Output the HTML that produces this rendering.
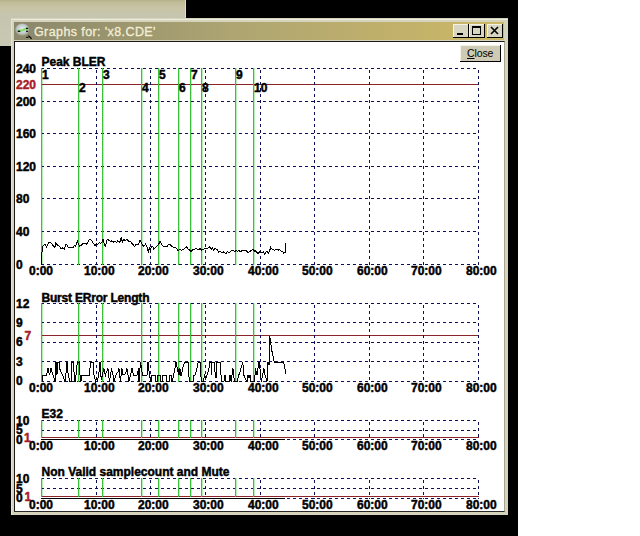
<!DOCTYPE html>
<html><head><meta charset="utf-8">
<style>
html,body{margin:0;padding:0;}
body{width:640px;height:536px;position:relative;overflow:hidden;background:#fff;font-family:"Liberation Sans", sans-serif;}
.a{position:absolute;}
</style></head><body>
<div class="a" style="left:0;top:0;width:518px;height:536px;background:#000"></div>
<div class="a" style="left:0;top:0;width:186px;height:46px;background:linear-gradient(#b2ae86 0px,#c0bc96 2px,#c8c4a6 8px,#c5c5b0 18px,#c8c8b4 46px)"></div>
<div class="a" style="left:185px;top:0;width:1px;height:18px;background:#dedcc8"></div>
<!-- window -->
<div class="a" style="left:11px;top:18px;width:497px;height:497px;background:#d6d3bd"></div>
<div class="a" style="left:11px;top:19px;width:497px;height:1px;background:#ecebdc"></div>
<div class="a" style="left:11px;top:19px;width:1px;height:496px;background:#e6e4d2"></div>
<div class="a" style="left:14px;top:22px;width:490px;height:18px;background:linear-gradient(90deg,#8a886c 0%,#aea572 45%,#cdb866 100%)"></div>
<div class="a" style="left:34px;top:25px;font-size:12.5px;color:#f2eed6;line-height:14px;white-space:nowrap;letter-spacing:0.4px;-webkit-text-stroke:0.3px #f2eed6">Graphs for: 'x8.CDE'</div>
<svg class="a" style="left:14px;top:22px" width="20" height="18">
<defs><radialGradient id="ig" cx="0.5" cy="0.45" r="0.55"><stop offset="0" stop-color="#e4ecf0"/><stop offset="0.6" stop-color="#c4ccd0"/><stop offset="1" stop-color="#9c9c84"/></radialGradient></defs>
<ellipse cx="8.3" cy="7.6" rx="7" ry="6.2" fill="url(#ig)"/>
<path d="M3 9.3 L8.5 8.2 L14 5.8" stroke="#78e050" stroke-width="2" fill="none" opacity="0.9"/>
<rect x="3.8" y="8.6" width="2.4" height="1.4" fill="#101010"/>
<rect x="12" y="5.8" width="2.2" height="1.3" fill="#101010"/>
<rect x="12" y="8.7" width="2.2" height="1.2" fill="#101010"/>
<path d="M14.3 13.6 L17.6 16.8" stroke="#000" stroke-width="1.2"/>
<rect x="12.2" y="14.8" width="2.2" height="1.1" fill="#000"/>
</svg>
<!-- caption buttons -->
<div class="a" style="left:453px;top:24px;width:16px;height:14px;background:#d8d5c0;box-shadow:inset -1px -1px #000,inset 1px 1px #f4f2e4"></div>
<div class="a" style="left:469px;top:24px;width:16px;height:14px;background:#d8d5c0;box-shadow:inset -1px -1px #000,inset 1px 1px #f4f2e4"></div>
<div class="a" style="left:487px;top:24px;width:16px;height:14px;background:#d8d5c0;box-shadow:inset -1px -1px #000,inset 1px 1px #f4f2e4"></div>
<div class="a" style="left:457px;top:33px;width:6px;height:2px;background:#000"></div>
<div class="a" style="left:472px;top:26px;width:9px;height:9px;box-sizing:border-box;border:1px solid #000;border-top-width:2px"></div>
<svg class="a" style="left:487px;top:24px" width="16" height="14"><path d="M4 3 L11 10 M11 3 L4 10" stroke="#000" stroke-width="1.6"/></svg>
<!-- client -->
<div class="a" style="left:14px;top:41px;width:491px;height:471px;background:#fff;box-sizing:border-box;border:1px solid #1a1a1a;border-right-color:#a8a690;border-bottom-color:#2a2a2a"></div>
<!-- close button -->
<div class="a" style="left:460px;top:45px;width:41px;height:17px;background:#cecab4;box-sizing:border-box;box-shadow:inset -1px -1px #000,inset 1px 1px #f4f2e4"></div>
<div class="a" style="left:467px;top:46px;font-size:10.5px;line-height:14px;color:#000;letter-spacing:-0.1px"><u>C</u>lose</div>
<svg class="a" style="left:0;top:0" width="640" height="536" font-family='"Liberation Sans", sans-serif' shape-rendering="crispEdges">
<line x1="42.5" y1="68" x2="42.5" y2="265" stroke="#b8f0b8"/>
<line x1="79.5" y1="68" x2="79.5" y2="265" stroke="#b8f0b8"/>
<line x1="103.5" y1="68" x2="103.5" y2="265" stroke="#b8f0b8"/>
<line x1="142.5" y1="68" x2="142.5" y2="265" stroke="#b8f0b8"/>
<line x1="159.5" y1="68" x2="159.5" y2="265" stroke="#b8f0b8"/>
<line x1="179.5" y1="68" x2="179.5" y2="265" stroke="#b8f0b8"/>
<line x1="191.5" y1="68" x2="191.5" y2="265" stroke="#b8f0b8"/>
<line x1="202.5" y1="68" x2="202.5" y2="265" stroke="#b8f0b8"/>
<line x1="236.5" y1="68" x2="236.5" y2="265" stroke="#b8f0b8"/>
<line x1="254.5" y1="68" x2="254.5" y2="265" stroke="#b8f0b8"/>
<text x="41.5" y="65.748" fill="#000" stroke="#000" stroke-width="0.45" font-size="12" font-weight="bold" text-anchor="start">Peak BLER</text>
<line x1="41" y1="68.5" x2="479" y2="68.5" stroke="#0e0e58" stroke-dasharray="3 3" stroke-dashoffset="0"/>
<text x="16" y="72.874" fill="#000" stroke="#000" stroke-width="0.45" font-size="12" font-weight="bold" text-anchor="start">240</text>
<line x1="41" y1="101.5" x2="479" y2="101.5" stroke="#0e0e58" stroke-dasharray="3 3" stroke-dashoffset="0"/>
<text x="16" y="105.874" fill="#000" stroke="#000" stroke-width="0.45" font-size="12" font-weight="bold" text-anchor="start">200</text>
<line x1="41" y1="133.5" x2="479" y2="133.5" stroke="#0e0e58" stroke-dasharray="3 3" stroke-dashoffset="0"/>
<text x="16" y="137.874" fill="#000" stroke="#000" stroke-width="0.45" font-size="12" font-weight="bold" text-anchor="start">160</text>
<line x1="41" y1="166.5" x2="479" y2="166.5" stroke="#0e0e58" stroke-dasharray="3 3" stroke-dashoffset="0"/>
<text x="16" y="170.874" fill="#000" stroke="#000" stroke-width="0.45" font-size="12" font-weight="bold" text-anchor="start">120</text>
<line x1="41" y1="198.5" x2="479" y2="198.5" stroke="#0e0e58" stroke-dasharray="3 3" stroke-dashoffset="0"/>
<text x="16" y="202.874" fill="#000" stroke="#000" stroke-width="0.45" font-size="12" font-weight="bold" text-anchor="start">80</text>
<line x1="41" y1="231.5" x2="479" y2="231.5" stroke="#0e0e58" stroke-dasharray="3 3" stroke-dashoffset="0"/>
<text x="16" y="235.874" fill="#000" stroke="#000" stroke-width="0.45" font-size="12" font-weight="bold" text-anchor="start">40</text>
<line x1="41" y1="264.5" x2="479" y2="264.5" stroke="#0e0e58" stroke-dasharray="3 3" stroke-dashoffset="0"/>
<text x="16" y="268.874" fill="#000" stroke="#000" stroke-width="0.45" font-size="12" font-weight="bold" text-anchor="start">0</text>
<line x1="41" y1="84.5" x2="479" y2="84.5" stroke="#8a2428"/>
<text x="16" y="88.874" fill="#a81c26" stroke="#a81c26" stroke-width="0.45" font-size="12" font-weight="bold" text-anchor="start">220</text>
<line x1="96.5" y1="68" x2="96.5" y2="265" stroke="#0e0e58" stroke-dasharray="3 3" stroke-dashoffset="-2"/>
<line x1="150.5" y1="68" x2="150.5" y2="265" stroke="#0e0e58" stroke-dasharray="3 3" stroke-dashoffset="-2"/>
<line x1="205.5" y1="68" x2="205.5" y2="265" stroke="#0e0e58" stroke-dasharray="3 3" stroke-dashoffset="-2"/>
<line x1="260.5" y1="68" x2="260.5" y2="265" stroke="#0e0e58" stroke-dasharray="3 3" stroke-dashoffset="-2"/>
<line x1="314.5" y1="68" x2="314.5" y2="265" stroke="#0e0e58" stroke-dasharray="3 3" stroke-dashoffset="-2"/>
<line x1="369.5" y1="68" x2="369.5" y2="265" stroke="#0e0e58" stroke-dasharray="3 3" stroke-dashoffset="-2"/>
<line x1="423.5" y1="68" x2="423.5" y2="265" stroke="#0e0e58" stroke-dasharray="3 3" stroke-dashoffset="-2"/>
<line x1="478.5" y1="68" x2="478.5" y2="265" stroke="#0e0e58" stroke-dasharray="3 3" stroke-dashoffset="-2"/>
<line x1="41.5" y1="68" x2="41.5" y2="265" stroke="#3cc03c"/>
<line x1="78.5" y1="68" x2="78.5" y2="265" stroke="#3cc03c"/>
<line x1="102.5" y1="68" x2="102.5" y2="265" stroke="#3cc03c"/>
<line x1="141.5" y1="68" x2="141.5" y2="265" stroke="#3cc03c"/>
<line x1="158.5" y1="68" x2="158.5" y2="265" stroke="#3cc03c"/>
<line x1="178.5" y1="68" x2="178.5" y2="265" stroke="#3cc03c"/>
<line x1="190.5" y1="68" x2="190.5" y2="265" stroke="#3cc03c"/>
<line x1="201.5" y1="68" x2="201.5" y2="265" stroke="#3cc03c"/>
<line x1="235.5" y1="68" x2="235.5" y2="265" stroke="#3cc03c"/>
<line x1="253.5" y1="68" x2="253.5" y2="265" stroke="#3cc03c"/>
<polyline fill="none" stroke="#000" stroke-width="1" points="41.5,264.5 41.5,255.9 42.7,247.0 43.6,245.1 45.0,244.2 46.4,247.0 47.6,245.45 48.8,242.3 50.2,242.8 51.6,243.4 53.0,245.6 54.9,247.5 55.8,243.2 57.7,245.1 59.6,246.5 61.0,248.4 62.4,247.9 64.2,249.3 65.6,245.1 66.6,244.2 67.5,246.5 68.9,247.9 70.8,247.5 72.7,247.9 74.1,245.6 75.5,246.1 77.4,241.4 78.3,244.2 79.7,246.1 81.1,245.6 83.0,243.7 84.9,243.2 86.7,244.2 87.7,242.3 89.1,239.7 90.5,239.5 91.9,240.9 93.3,243.2 95.0,245.9 96.4,243.8 97.8,244.1 99.2,242.65 100.6,243.6 101.8,242.3 103.0,239.4 104.4,244.1 105.3,246.4 107.2,239.4 109.1,240.3 110.5,241.7 111.9,240.8 113.7,242.2 115.2,241.2 116.6,242.2 117.67,241.0 118.73,241.4 119.8,242.2 121.2,237.5 122.2,242.2 123.6,239.4 125.0,240.3 126.9,239.4 128.7,241.2 130.15,240.95 131.6,243.1 133.4,245.0 134.4,246.4 136.2,244.5 138.1,245.0 140.0,240.3 141.9,244.1 143.7,246.4 145.6,244.1 147.0,247.3 148.4,251.6 149.4,246.9 150.3,251.6 151.2,246.9 152.47,246.13 153.73,248.97 155.0,248.2 156.9,246.4 158.7,244.1 160.2,241.2 161.6,244.1 162.5,245.9 164.4,246.9 165.8,246.4 167.2,246.9 168.6,244.1 170.0,244.1 171.9,246.4 173.7,247.8 175.2,247.3 177.0,248.7 178.0,250.6 179.8,249.2 181.2,250.2 183.1,249.7 185.0,247.8 186.4,246.4 187.8,248.7 189.7,250.2 190.85,251.6 192.0,250.6 193.2,248.95 194.4,249.7 196.2,248.3 198.1,249.7 200.0,248.7 201.9,250.2 203.7,249.2 204.9,248.15 206.1,248.7 207.5,248.7 209.4,246.9 211.2,249.2 212.47,247.77 213.73,249.93 215.0,248.5 216.9,249.2 218.7,252.5 220.2,251.1 222.0,253.0 223.9,251.6 225.8,253.9 227.2,251.6 229.1,252.5 230.9,251.1 232.8,250.2 234.7,251.6 236.1,250.4 237.5,251.6 238.9,250.6 240.3,252.0 242.2,250.2 244.1,251.1 245.9,250.2 247.8,252.5 249.7,251.6 251.6,250.2 253.0,249.7 254.4,251.1 255.55,251.0 256.7,252.5 258.4,253.5 260.0,251.0 261.7,252.7 263.4,251.8 264.6,253.9 266.3,251.8 267.35,251.25 268.4,253.1 270.1,249.3 270.5,246.4 271.4,248.9 273.0,249.3 274.7,250.2 276.4,249.3 278.1,250.2 279.7,249.3 281.0,251.0 282.7,251.8 283.75,253.25 284.8,252.3 285.9,251.8 285.9,243"/>
<text x="29" y="274.748" fill="#000" stroke="#000" stroke-width="0.45" font-size="12" font-weight="bold" text-anchor="start">0:00</text>
<text x="84" y="274.748" fill="#000" stroke="#000" stroke-width="0.45" font-size="12" font-weight="bold" text-anchor="start">10:00</text>
<text x="138" y="274.748" fill="#000" stroke="#000" stroke-width="0.45" font-size="12" font-weight="bold" text-anchor="start">20:00</text>
<text x="193" y="274.748" fill="#000" stroke="#000" stroke-width="0.45" font-size="12" font-weight="bold" text-anchor="start">30:00</text>
<text x="248" y="274.748" fill="#000" stroke="#000" stroke-width="0.45" font-size="12" font-weight="bold" text-anchor="start">40:00</text>
<text x="302" y="274.748" fill="#000" stroke="#000" stroke-width="0.45" font-size="12" font-weight="bold" text-anchor="start">50:00</text>
<text x="357" y="274.748" fill="#000" stroke="#000" stroke-width="0.45" font-size="12" font-weight="bold" text-anchor="start">60:00</text>
<text x="411" y="274.748" fill="#000" stroke="#000" stroke-width="0.45" font-size="12" font-weight="bold" text-anchor="start">70:00</text>
<text x="466" y="274.748" fill="#000" stroke="#000" stroke-width="0.45" font-size="12" font-weight="bold" text-anchor="start">80:00</text>
<text x="42" y="78.748" fill="#000" stroke="#000" stroke-width="0.45" font-size="12" font-weight="bold" text-anchor="start">1</text>
<text x="79" y="91.748" fill="#000" stroke="#000" stroke-width="0.45" font-size="12" font-weight="bold" text-anchor="start">2</text>
<text x="103" y="78.748" fill="#000" stroke="#000" stroke-width="0.45" font-size="12" font-weight="bold" text-anchor="start">3</text>
<text x="142" y="91.748" fill="#000" stroke="#000" stroke-width="0.45" font-size="12" font-weight="bold" text-anchor="start">4</text>
<text x="159" y="78.748" fill="#000" stroke="#000" stroke-width="0.45" font-size="12" font-weight="bold" text-anchor="start">5</text>
<text x="179" y="91.748" fill="#000" stroke="#000" stroke-width="0.45" font-size="12" font-weight="bold" text-anchor="start">6</text>
<text x="191" y="78.748" fill="#000" stroke="#000" stroke-width="0.45" font-size="12" font-weight="bold" text-anchor="start">7</text>
<text x="202" y="91.748" fill="#000" stroke="#000" stroke-width="0.45" font-size="12" font-weight="bold" text-anchor="start">8</text>
<text x="236" y="78.748" fill="#000" stroke="#000" stroke-width="0.45" font-size="12" font-weight="bold" text-anchor="start">9</text>
<text x="254" y="91.748" fill="#000" stroke="#000" stroke-width="0.45" font-size="12" font-weight="bold" text-anchor="start">10</text>
<line x1="42.5" y1="303" x2="42.5" y2="382" stroke="#b8f0b8"/>
<line x1="79.5" y1="303" x2="79.5" y2="382" stroke="#b8f0b8"/>
<line x1="103.5" y1="303" x2="103.5" y2="382" stroke="#b8f0b8"/>
<line x1="142.5" y1="303" x2="142.5" y2="382" stroke="#b8f0b8"/>
<line x1="159.5" y1="303" x2="159.5" y2="382" stroke="#b8f0b8"/>
<line x1="179.5" y1="303" x2="179.5" y2="382" stroke="#b8f0b8"/>
<line x1="191.5" y1="303" x2="191.5" y2="382" stroke="#b8f0b8"/>
<line x1="202.5" y1="303" x2="202.5" y2="382" stroke="#b8f0b8"/>
<line x1="236.5" y1="303" x2="236.5" y2="382" stroke="#b8f0b8"/>
<line x1="254.5" y1="303" x2="254.5" y2="382" stroke="#b8f0b8"/>
<text x="41.5" y="301.748" textLength="108" lengthAdjust="spacing" fill="#000" stroke="#000" stroke-width="0.45" font-size="12" font-weight="bold" text-anchor="start">Burst ERror Length</text>
<line x1="41" y1="303.5" x2="479" y2="303.5" stroke="#0e0e58" stroke-dasharray="3 3" stroke-dashoffset="0"/>
<text x="16" y="307.874" fill="#000" stroke="#000" stroke-width="0.45" font-size="12" font-weight="bold" text-anchor="start">12</text>
<line x1="41" y1="322.5" x2="479" y2="322.5" stroke="#0e0e58" stroke-dasharray="3 3" stroke-dashoffset="0"/>
<text x="16" y="326.874" fill="#000" stroke="#000" stroke-width="0.45" font-size="12" font-weight="bold" text-anchor="start">9</text>
<line x1="41" y1="342.5" x2="479" y2="342.5" stroke="#0e0e58" stroke-dasharray="3 3" stroke-dashoffset="0"/>
<text x="16" y="346.074" fill="#000" stroke="#000" stroke-width="0.45" font-size="12" font-weight="bold" text-anchor="start">6</text>
<line x1="41" y1="361.5" x2="479" y2="361.5" stroke="#0e0e58" stroke-dasharray="3 3" stroke-dashoffset="0"/>
<text x="16" y="365.67400000000004" fill="#000" stroke="#000" stroke-width="0.45" font-size="12" font-weight="bold" text-anchor="start">3</text>
<line x1="41" y1="381.5" x2="479" y2="381.5" stroke="#0e0e58" stroke-dasharray="3 3" stroke-dashoffset="0"/>
<text x="16" y="385.374" fill="#000" stroke="#000" stroke-width="0.45" font-size="12" font-weight="bold" text-anchor="start">0</text>
<line x1="41" y1="335.5" x2="479" y2="335.5" stroke="#8a2428"/>
<text x="24.5" y="339.874" fill="#a81c26" stroke="#a81c26" stroke-width="0.45" font-size="12" font-weight="bold" text-anchor="start">7</text>
<line x1="96.5" y1="303" x2="96.5" y2="382" stroke="#0e0e58" stroke-dasharray="3 3" stroke-dashoffset="-2"/>
<line x1="150.5" y1="303" x2="150.5" y2="382" stroke="#0e0e58" stroke-dasharray="3 3" stroke-dashoffset="-2"/>
<line x1="205.5" y1="303" x2="205.5" y2="382" stroke="#0e0e58" stroke-dasharray="3 3" stroke-dashoffset="-2"/>
<line x1="260.5" y1="303" x2="260.5" y2="382" stroke="#0e0e58" stroke-dasharray="3 3" stroke-dashoffset="-2"/>
<line x1="314.5" y1="303" x2="314.5" y2="382" stroke="#0e0e58" stroke-dasharray="3 3" stroke-dashoffset="-2"/>
<line x1="369.5" y1="303" x2="369.5" y2="382" stroke="#0e0e58" stroke-dasharray="3 3" stroke-dashoffset="-2"/>
<line x1="423.5" y1="303" x2="423.5" y2="382" stroke="#0e0e58" stroke-dasharray="3 3" stroke-dashoffset="-2"/>
<line x1="478.5" y1="303" x2="478.5" y2="382" stroke="#0e0e58" stroke-dasharray="3 3" stroke-dashoffset="-2"/>
<line x1="41.5" y1="303" x2="41.5" y2="382" stroke="#3cc03c"/>
<line x1="78.5" y1="303" x2="78.5" y2="382" stroke="#3cc03c"/>
<line x1="102.5" y1="303" x2="102.5" y2="382" stroke="#3cc03c"/>
<line x1="141.5" y1="303" x2="141.5" y2="382" stroke="#3cc03c"/>
<line x1="158.5" y1="303" x2="158.5" y2="382" stroke="#3cc03c"/>
<line x1="178.5" y1="303" x2="178.5" y2="382" stroke="#3cc03c"/>
<line x1="190.5" y1="303" x2="190.5" y2="382" stroke="#3cc03c"/>
<line x1="201.5" y1="303" x2="201.5" y2="382" stroke="#3cc03c"/>
<line x1="235.5" y1="303" x2="235.5" y2="382" stroke="#3cc03c"/>
<line x1="253.5" y1="303" x2="253.5" y2="382" stroke="#3cc03c"/>
<polyline fill="none" stroke="#000" stroke-width="1" points="42.0,381.5 42.5,375.0 46.5,375.0 48.0,368.5 49.5,375.0 51.0,368.5 55.0,381.5 55.5,375.0 56.0,362.0 57.0,375.0 57.5,362.0 59.0,362.0 59.5,368.5 62.5,375.0 65.0,381.5 66.5,368.5 67.0,362.0 67.5,371.75 68.5,375.0 69.5,381.5 71.5,381.5 72.0,362.0 73.0,362.0 74.0,371.75 74.5,381.5 75.5,381.5 76.5,368.5 77.5,362.0 79.0,362.0 80.0,375.0 81.0,381.5 81.5,375.0 89.5,375.0 90.0,368.5 91.0,362.0 93.0,362.0 94.0,375.0 95.5,381.5 96.5,378.25 97.5,381.5 99.0,371.75 100.0,362.0 100.7,375.0 101.5,379.55 102.5,373.7 104.0,368.5 104.5,371.75 105.5,375.0 106.5,371.75 108.0,368.5 109.0,378.25 109.5,381.5 110.5,375.0 111.5,368.5 113.0,375.0 114.0,381.5 115.0,378.25 116.0,375.0 118.0,371.75 119.0,368.5 120.0,378.25 120.5,381.5 121.5,371.75 122.0,368.5 123.0,375.0 125.5,373.7 127.0,368.5 129.0,381.5 132.0,368.5 133.5,375.0 137.0,375.0 138.5,368.5 139.0,381.5 140.5,362.0 141.5,368.5 142.5,375.0 147.0,375.0 148.0,362.0 149.5,375.0 150.5,381.5 151.5,381.5 152.0,375.0 155.5,375.0 156.0,381.5 157.5,381.5 158.0,375.0 160.5,375.0 161.0,381.5 162.5,381.5 163.0,375.0 166.5,375.0 167.0,381.5 169.0,381.5 169.5,375.0 171.0,375.0 171.5,381.5 172.5,381.5 173.5,375.0 175.0,368.5 176.0,362.0 176.5,362.0 177.5,371.75 178.0,368.5 179.0,375.0 180.0,368.5 180.5,375.0 181.5,375.0 182.5,368.5 184.5,362.0 188.3,362.0 188.8,375.0 189.5,381.5 193.0,381.5 194.0,375.0 195.0,375.0 196.0,371.75 197.0,368.5 198.1,362.0 200.0,362.0 200.8,375.0 201.5,381.5 203.5,381.5 204.5,375.0 206.0,378.25 207.0,375.0 208.0,371.75 209.0,368.5 209.9,362.0 211.0,362.0 211.5,375.0 212.0,362.0 214.5,362.0 215.0,371.75 216.0,378.25 216.5,362.0 220.0,362.0 221.0,375.0 222.0,381.5 224.0,381.5 225.0,375.0 225.5,381.5 229.2,381.5 230.0,375.0 231.1,381.5 232.0,375.0 233.0,368.5 234.4,381.5 237.5,381.5 238.5,375.0 239.5,373.7 241.0,368.5 242.8,362.0 243.8,375.0 245.0,378.25 247.0,381.5 248.0,375.0 249.0,378.25 250.0,375.0 251.0,381.5 254.5,381.5 255.5,368.5 257.0,375.0 258.0,368.5 258.8,362.0 259.5,362.0 260.5,375.0 261.5,381.5 262.5,375.0 264.0,368.5 265.0,375.0 266.0,378.25 267.0,381.5 268.0,362.0 269.0,365.25 269.8,336.0 271.5,349.0 274.2,362.0 283.5,362.0 286.0,373.7"/>
<text x="29" y="392.248" fill="#000" stroke="#000" stroke-width="0.45" font-size="12" font-weight="bold" text-anchor="start">0:00</text>
<text x="84" y="392.248" fill="#000" stroke="#000" stroke-width="0.45" font-size="12" font-weight="bold" text-anchor="start">10:00</text>
<text x="138" y="392.248" fill="#000" stroke="#000" stroke-width="0.45" font-size="12" font-weight="bold" text-anchor="start">20:00</text>
<text x="193" y="392.248" fill="#000" stroke="#000" stroke-width="0.45" font-size="12" font-weight="bold" text-anchor="start">30:00</text>
<text x="248" y="392.248" fill="#000" stroke="#000" stroke-width="0.45" font-size="12" font-weight="bold" text-anchor="start">40:00</text>
<text x="302" y="392.248" fill="#000" stroke="#000" stroke-width="0.45" font-size="12" font-weight="bold" text-anchor="start">50:00</text>
<text x="357" y="392.248" fill="#000" stroke="#000" stroke-width="0.45" font-size="12" font-weight="bold" text-anchor="start">60:00</text>
<text x="411" y="392.248" fill="#000" stroke="#000" stroke-width="0.45" font-size="12" font-weight="bold" text-anchor="start">70:00</text>
<text x="466" y="392.248" fill="#000" stroke="#000" stroke-width="0.45" font-size="12" font-weight="bold" text-anchor="start">80:00</text>
<line x1="42.5" y1="420" x2="42.5" y2="438" stroke="#b8f0b8"/>
<line x1="79.5" y1="420" x2="79.5" y2="438" stroke="#b8f0b8"/>
<line x1="103.5" y1="420" x2="103.5" y2="438" stroke="#b8f0b8"/>
<line x1="142.5" y1="420" x2="142.5" y2="438" stroke="#b8f0b8"/>
<line x1="159.5" y1="420" x2="159.5" y2="438" stroke="#b8f0b8"/>
<line x1="179.5" y1="420" x2="179.5" y2="438" stroke="#b8f0b8"/>
<line x1="191.5" y1="420" x2="191.5" y2="438" stroke="#b8f0b8"/>
<line x1="202.5" y1="420" x2="202.5" y2="438" stroke="#b8f0b8"/>
<line x1="236.5" y1="420" x2="236.5" y2="438" stroke="#b8f0b8"/>
<line x1="254.5" y1="420" x2="254.5" y2="438" stroke="#b8f0b8"/>
<text x="41.5" y="418.248" fill="#000" stroke="#000" stroke-width="0.45" font-size="12" font-weight="bold" text-anchor="start">E32</text>
<line x1="41" y1="420.5" x2="479" y2="420.5" stroke="#0e0e58" stroke-dasharray="3 3" stroke-dashoffset="0"/>
<text x="16" y="424.874" fill="#000" stroke="#000" stroke-width="0.45" font-size="12" font-weight="bold" text-anchor="start">10</text>
<line x1="41" y1="430.5" x2="479" y2="430.5" stroke="#0e0e58" stroke-dasharray="3 3" stroke-dashoffset="0"/>
<text x="16" y="433.874" fill="#000" stroke="#000" stroke-width="0.45" font-size="12" font-weight="bold" text-anchor="start">5</text>
<line x1="41" y1="439.5" x2="479" y2="439.5" stroke="#0e0e58" stroke-dasharray="3 3" stroke-dashoffset="0"/>
<text x="16" y="443.874" fill="#000" stroke="#000" stroke-width="0.45" font-size="12" font-weight="bold" text-anchor="start">0</text>
<line x1="41" y1="437.5" x2="479" y2="437.5" stroke="#8a2428"/>
<text x="24" y="441.874" fill="#a81c26" stroke="#a81c26" stroke-width="0.45" font-size="12" font-weight="bold" text-anchor="start">1</text>
<line x1="96.5" y1="420" x2="96.5" y2="440" stroke="#0e0e58" stroke-dasharray="3 3" stroke-dashoffset="-2"/>
<line x1="150.5" y1="420" x2="150.5" y2="440" stroke="#0e0e58" stroke-dasharray="3 3" stroke-dashoffset="-2"/>
<line x1="205.5" y1="420" x2="205.5" y2="440" stroke="#0e0e58" stroke-dasharray="3 3" stroke-dashoffset="-2"/>
<line x1="260.5" y1="420" x2="260.5" y2="440" stroke="#0e0e58" stroke-dasharray="3 3" stroke-dashoffset="-2"/>
<line x1="314.5" y1="420" x2="314.5" y2="440" stroke="#0e0e58" stroke-dasharray="3 3" stroke-dashoffset="-2"/>
<line x1="369.5" y1="420" x2="369.5" y2="440" stroke="#0e0e58" stroke-dasharray="3 3" stroke-dashoffset="-2"/>
<line x1="423.5" y1="420" x2="423.5" y2="440" stroke="#0e0e58" stroke-dasharray="3 3" stroke-dashoffset="-2"/>
<line x1="478.5" y1="420" x2="478.5" y2="440" stroke="#0e0e58" stroke-dasharray="3 3" stroke-dashoffset="-2"/>
<line x1="41.5" y1="420" x2="41.5" y2="438" stroke="#3cc03c"/>
<line x1="78.5" y1="420" x2="78.5" y2="438" stroke="#3cc03c"/>
<line x1="102.5" y1="420" x2="102.5" y2="438" stroke="#3cc03c"/>
<line x1="141.5" y1="420" x2="141.5" y2="438" stroke="#3cc03c"/>
<line x1="158.5" y1="420" x2="158.5" y2="438" stroke="#3cc03c"/>
<line x1="178.5" y1="420" x2="178.5" y2="438" stroke="#3cc03c"/>
<line x1="190.5" y1="420" x2="190.5" y2="438" stroke="#3cc03c"/>
<line x1="201.5" y1="420" x2="201.5" y2="438" stroke="#3cc03c"/>
<line x1="235.5" y1="420" x2="235.5" y2="438" stroke="#3cc03c"/>
<line x1="253.5" y1="420" x2="253.5" y2="438" stroke="#3cc03c"/>
<polyline fill="none" stroke="#000" stroke-width="1" points="41,439.5 285,439.5"/>
<text x="29" y="449.748" fill="#000" stroke="#000" stroke-width="0.45" font-size="12" font-weight="bold" text-anchor="start">0:00</text>
<text x="84" y="449.748" fill="#000" stroke="#000" stroke-width="0.45" font-size="12" font-weight="bold" text-anchor="start">10:00</text>
<text x="138" y="449.748" fill="#000" stroke="#000" stroke-width="0.45" font-size="12" font-weight="bold" text-anchor="start">20:00</text>
<text x="193" y="449.748" fill="#000" stroke="#000" stroke-width="0.45" font-size="12" font-weight="bold" text-anchor="start">30:00</text>
<text x="248" y="449.748" fill="#000" stroke="#000" stroke-width="0.45" font-size="12" font-weight="bold" text-anchor="start">40:00</text>
<text x="302" y="449.748" fill="#000" stroke="#000" stroke-width="0.45" font-size="12" font-weight="bold" text-anchor="start">50:00</text>
<text x="357" y="449.748" fill="#000" stroke="#000" stroke-width="0.45" font-size="12" font-weight="bold" text-anchor="start">60:00</text>
<text x="411" y="449.748" fill="#000" stroke="#000" stroke-width="0.45" font-size="12" font-weight="bold" text-anchor="start">70:00</text>
<text x="466" y="449.748" fill="#000" stroke="#000" stroke-width="0.45" font-size="12" font-weight="bold" text-anchor="start">80:00</text>
<line x1="42.5" y1="478" x2="42.5" y2="497" stroke="#b8f0b8"/>
<line x1="79.5" y1="478" x2="79.5" y2="497" stroke="#b8f0b8"/>
<line x1="103.5" y1="478" x2="103.5" y2="497" stroke="#b8f0b8"/>
<line x1="142.5" y1="478" x2="142.5" y2="497" stroke="#b8f0b8"/>
<line x1="159.5" y1="478" x2="159.5" y2="497" stroke="#b8f0b8"/>
<line x1="179.5" y1="478" x2="179.5" y2="497" stroke="#b8f0b8"/>
<line x1="191.5" y1="478" x2="191.5" y2="497" stroke="#b8f0b8"/>
<line x1="202.5" y1="478" x2="202.5" y2="497" stroke="#b8f0b8"/>
<line x1="236.5" y1="478" x2="236.5" y2="497" stroke="#b8f0b8"/>
<line x1="254.5" y1="478" x2="254.5" y2="497" stroke="#b8f0b8"/>
<text x="41.5" y="476.248" fill="#000" stroke="#000" stroke-width="0.45" font-size="12" font-weight="bold" text-anchor="start">Non Valid samplecount and Mute</text>
<line x1="41" y1="478.5" x2="479" y2="478.5" stroke="#0e0e58" stroke-dasharray="3 3" stroke-dashoffset="0"/>
<text x="16" y="482.874" fill="#000" stroke="#000" stroke-width="0.45" font-size="12" font-weight="bold" text-anchor="start">10</text>
<line x1="41" y1="488.5" x2="479" y2="488.5" stroke="#0e0e58" stroke-dasharray="3 3" stroke-dashoffset="0"/>
<text x="16" y="492.874" fill="#000" stroke="#000" stroke-width="0.45" font-size="12" font-weight="bold" text-anchor="start">5</text>
<line x1="41" y1="498.5" x2="479" y2="498.5" stroke="#0e0e58" stroke-dasharray="3 3" stroke-dashoffset="0"/>
<text x="16" y="501.874" fill="#000" stroke="#000" stroke-width="0.45" font-size="12" font-weight="bold" text-anchor="start">0</text>
<line x1="41" y1="496.5" x2="479" y2="496.5" stroke="#8a2428"/>
<text x="24.5" y="500.874" fill="#a81c26" stroke="#a81c26" stroke-width="0.45" font-size="12" font-weight="bold" text-anchor="start">1</text>
<line x1="96.5" y1="478" x2="96.5" y2="499" stroke="#0e0e58" stroke-dasharray="3 3" stroke-dashoffset="-2"/>
<line x1="150.5" y1="478" x2="150.5" y2="499" stroke="#0e0e58" stroke-dasharray="3 3" stroke-dashoffset="-2"/>
<line x1="205.5" y1="478" x2="205.5" y2="499" stroke="#0e0e58" stroke-dasharray="3 3" stroke-dashoffset="-2"/>
<line x1="260.5" y1="478" x2="260.5" y2="499" stroke="#0e0e58" stroke-dasharray="3 3" stroke-dashoffset="-2"/>
<line x1="314.5" y1="478" x2="314.5" y2="499" stroke="#0e0e58" stroke-dasharray="3 3" stroke-dashoffset="-2"/>
<line x1="369.5" y1="478" x2="369.5" y2="499" stroke="#0e0e58" stroke-dasharray="3 3" stroke-dashoffset="-2"/>
<line x1="423.5" y1="478" x2="423.5" y2="499" stroke="#0e0e58" stroke-dasharray="3 3" stroke-dashoffset="-2"/>
<line x1="478.5" y1="478" x2="478.5" y2="499" stroke="#0e0e58" stroke-dasharray="3 3" stroke-dashoffset="-2"/>
<line x1="41.5" y1="478" x2="41.5" y2="497" stroke="#3cc03c"/>
<line x1="78.5" y1="478" x2="78.5" y2="497" stroke="#3cc03c"/>
<line x1="102.5" y1="478" x2="102.5" y2="497" stroke="#3cc03c"/>
<line x1="141.5" y1="478" x2="141.5" y2="497" stroke="#3cc03c"/>
<line x1="158.5" y1="478" x2="158.5" y2="497" stroke="#3cc03c"/>
<line x1="178.5" y1="478" x2="178.5" y2="497" stroke="#3cc03c"/>
<line x1="190.5" y1="478" x2="190.5" y2="497" stroke="#3cc03c"/>
<line x1="201.5" y1="478" x2="201.5" y2="497" stroke="#3cc03c"/>
<line x1="235.5" y1="478" x2="235.5" y2="497" stroke="#3cc03c"/>
<line x1="253.5" y1="478" x2="253.5" y2="497" stroke="#3cc03c"/>
<polyline fill="none" stroke="#000" stroke-width="1" points="41,498.5 285,498.5"/>
<text x="29" y="508.748" fill="#000" stroke="#000" stroke-width="0.45" font-size="12" font-weight="bold" text-anchor="start">0:00</text>
<text x="84" y="508.748" fill="#000" stroke="#000" stroke-width="0.45" font-size="12" font-weight="bold" text-anchor="start">10:00</text>
<text x="138" y="508.748" fill="#000" stroke="#000" stroke-width="0.45" font-size="12" font-weight="bold" text-anchor="start">20:00</text>
<text x="193" y="508.748" fill="#000" stroke="#000" stroke-width="0.45" font-size="12" font-weight="bold" text-anchor="start">30:00</text>
<text x="248" y="508.748" fill="#000" stroke="#000" stroke-width="0.45" font-size="12" font-weight="bold" text-anchor="start">40:00</text>
<text x="302" y="508.748" fill="#000" stroke="#000" stroke-width="0.45" font-size="12" font-weight="bold" text-anchor="start">50:00</text>
<text x="357" y="508.748" fill="#000" stroke="#000" stroke-width="0.45" font-size="12" font-weight="bold" text-anchor="start">60:00</text>
<text x="411" y="508.748" fill="#000" stroke="#000" stroke-width="0.45" font-size="12" font-weight="bold" text-anchor="start">70:00</text>
<text x="466" y="508.748" fill="#000" stroke="#000" stroke-width="0.45" font-size="12" font-weight="bold" text-anchor="start">80:00</text>
</svg>
</body></html>
